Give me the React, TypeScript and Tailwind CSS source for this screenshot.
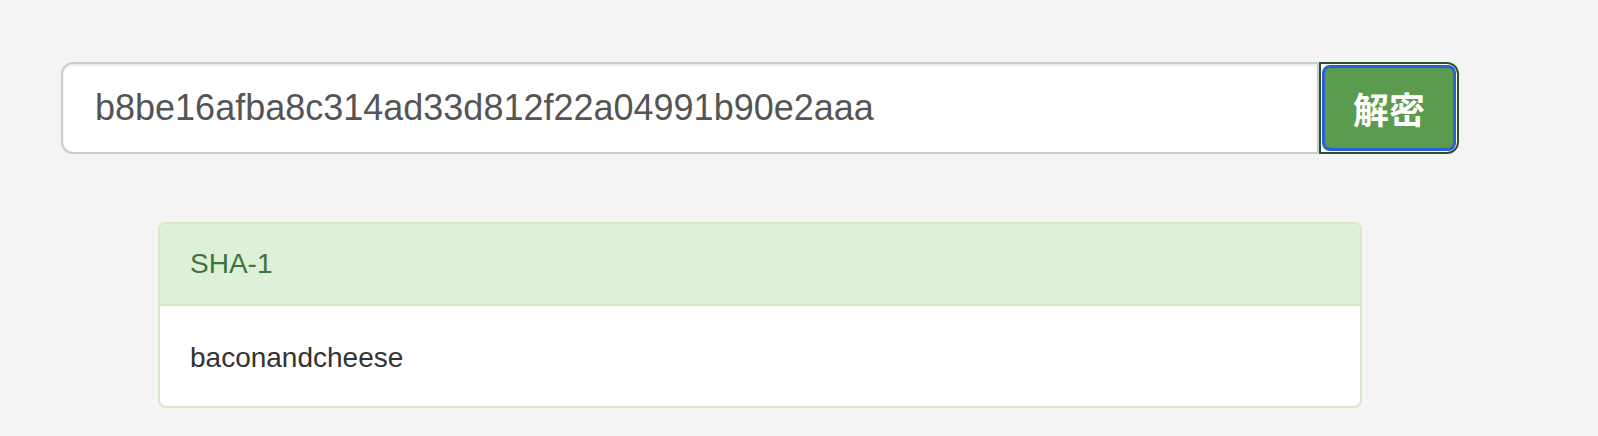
export default function App() {
  return (
    <div className="min-h-[436px] w-full bg-[#f4f4f4] pt-[62px] pl-[61px]" style={{ fontFamily: '"Liberation Sans", Arial, "Noto Sans CJK SC", sans-serif' }}>
      <div className="flex w-[1398px] h-[92px]">
        <div className="flex-1 flex items-center h-full bg-white border-2 border-[#cccccc] rounded-l-[12px] pl-[32px] text-[36px] text-[#555555] shadow-[inset_0_2px_2px_rgba(0,0,0,0.075)]">
          b8be16afba8c314ad33d812f22a04991b90e2aaa
        </div>
        <button className="w-[140px] h-full border-2 border-[#2b542c] rounded-r-[12px] bg-white p-[1px] flex">
          <span className="flex-1 flex items-center justify-center border-[3px] border-[#2d5fd2] rounded-[8px] bg-[#5a9b4f] text-white text-[36px] font-bold" style={{ fontFamily: '"Noto Sans CJK SC", sans-serif' }}>
            解密
          </span>
        </button>
      </div>
      <div className="mt-[68px] ml-[97px] w-[1204px] bg-white border-2 border-[#d6e9c6] rounded-[8px] overflow-hidden">
        <div className="bg-[#dff0d8] border-b-2 border-[#d6e9c6] px-[30px] py-[20px] text-[28px] leading-[40px] text-[#3c763d]">
          SHA-1
        </div>
        <div className="px-[30px] pt-[32px] pb-[28px] text-[28px] leading-[40px] text-[#333333]">
          baconandcheese
        </div>
      </div>
    </div>
  );
}
